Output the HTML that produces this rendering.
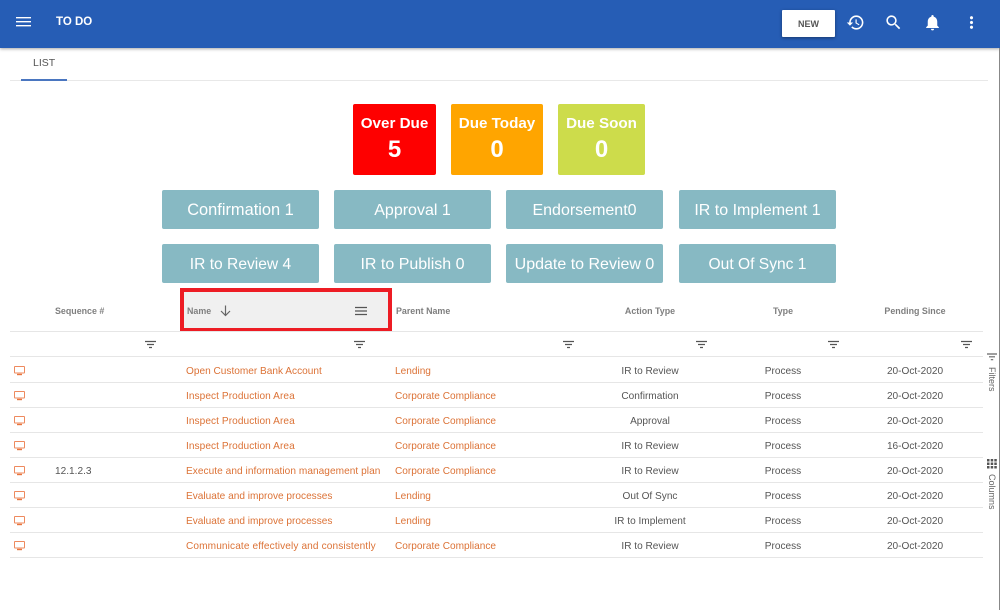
<!DOCTYPE html>
<html><head><meta charset="utf-8"><style>
*{box-sizing:border-box}
html,body{margin:0;padding:0;width:1000px;height:610px;overflow:hidden;background:#fff;font-family:"Liberation Sans",sans-serif}
.a{position:absolute;white-space:nowrap}
.bar{left:0;top:0;width:1000px;height:48px;background:#265db5;box-shadow:0 1px 3px rgba(0,0,0,.35)}
.card{top:104px;height:71px;border-radius:2px;color:#fff;text-align:center;font-weight:bold}
.card b{display:block;font-size:15.2px;line-height:18px;margin-top:11px}
.card i{display:block;font-style:normal;font-size:24px;line-height:28px;margin-top:3px}
.btn{width:157px;height:39px;line-height:41px;background:#87b9c3;border-radius:2px;color:#fff;text-align:center;font-size:16px}
.h{font-size:8.9px;font-weight:bold;color:#7f7f7f;line-height:12px}
.c{font-size:10.1px;line-height:12px;color:#555}
.n{color:#dc7236}
.ctr{transform:translateX(-50%)}
.l{left:10px;width:973px;height:1px;background:#e6e6e6}
</style></head><body>
<div class="a bar"></div>
<svg class="a" style="left:16px;top:17px" width="15" height="10"><path d="M0 .7h15M0 4.700h15M0 8.700h15" stroke="#fff" stroke-width="1.400" fill="none"/></svg>
<div class="a" style="left:56px;top:15px;font-size:11.500px;line-height:14px;font-weight:bold;color:#fff">TO DO</div>
<div class="a" style="left:782px;top:10px;width:53px;height:27px;line-height:29px;background:#fff;border-radius:1px;text-align:center;font-size:9px;font-weight:bold;color:#555;box-shadow:0 1px 3px rgba(0,0,0,.4)">NEW</div>
<svg class="a" style="left:846px;top:13px" width="19" height="19" viewBox="0 0 24 24" fill="#fff"><path d="M13 3c-4.970 0-9 4.030-9 9H1l3.890 3.890.07.140L9 12H6c0-3.870 3.130-7 7-7s7 3.130 7 7-3.130 7-7 7c-1.930 0-3.680-.790-4.940-2.060l-1.420 1.420C8.270 19.990 10.510 21 13 21c4.970 0 9-4.030 9-9s-4.030-9-9-9zm-1 5v5l4.280 2.540.720-1.210-3.500-2.080V8H12z"/></svg>
<svg class="a" style="left:884px;top:13px" width="19" height="19" viewBox="0 0 24 24" fill="#fff"><path d="M15.500 14h-.790l-.280-.270C15.410 12.590 16 11.110 16 9.500 16 5.910 13.090 3 9.500 3S3 5.910 3 9.500 5.910 16 9.500 16c1.610 0 3.090-.590 4.230-1.570l.270.280v.790l5 4.990L20.490 19l-4.990-5zm-6 0C7.010 14 5 11.990 5 9.500S7.010 5 9.500 5 14 7.010 14 9.500 11.990 14 9.500 14z"/></svg>
<svg class="a" style="left:923px;top:13px" width="19" height="19" viewBox="0 0 24 24" fill="#fff"><path d="M12 22c1.100 0 2-.9 2-2h-4c0 1.100.9 2 2 2zm6-6v-5c0-3.070-1.630-5.640-4.500-6.320V4c0-.830-.670-1.500-1.500-1.500s-1.500.670-1.500 1.500v.680C7.640 5.360 6 7.920 6 11v5l-2 2v1h16v-1l-2-2z"/></svg>
<svg class="a" style="left:962px;top:13px" width="19" height="19" viewBox="0 0 24 24" fill="#fff"><path d="M12 8c1.100 0 2-.9 2-2s-.9-2-2-2-2 .9-2 2 .9 2 2 2zm0 2c-1.100 0-2 .9-2 2s.9 2 2 2 2-.9 2-2-.9-2-2-2zm0 6c-1.100 0-2 .9-2 2s.9 2 2 2 2-.9 2-2-.9-2-2-2z"/></svg>
<div class="a" style="left:999px;top:48px;width:1px;height:562px;background:#888"></div>

<div class="a" style="left:33px;top:57px;font-size:10.500px;line-height:13px;color:#555">LIST</div>
<div class="a" style="left:10px;top:80px;width:978px;height:1px;background:#e8e8e8"></div>
<div class="a" style="left:21px;top:79px;width:46px;height:2px;background:#4a76c0"></div>

<div class="a card" style="left:353px;width:83px;background:#fe0000"><b>Over Due</b><i>5</i></div>
<div class="a card" style="left:451px;width:92px;background:#ffa500"><b>Due Today</b><i>0</i></div>
<div class="a card" style="left:558px;width:87px;background:#cddc4b"><b>Due Soon</b><i>0</i></div>

<div class="a btn" style="left:162px;top:190px;font-size:16.400px">Confirmation 1</div>
<div class="a btn" style="left:334px;top:190px">Approval 1</div>
<div class="a btn" style="left:506px;top:190px">Endorsement0</div>
<div class="a btn" style="left:679px;top:190px">IR to Implement 1</div>
<div class="a btn" style="left:162px;top:244px;font-size:15.600px">IR to Review 4</div>
<div class="a btn" style="left:334px;top:244px">IR to Publish 0</div>
<div class="a btn" style="left:506px;top:244px">Update to Review 0</div>
<div class="a btn" style="left:679px;top:244px;font-size:15.600px">Out Of Sync 1</div>

<div class="a" style="left:180px;top:288px;width:212px;height:44px;background:#f0f0f0;border:4px solid #ed1c24"></div>
<div class="a h" style="left:55px;top:305px">Sequence #</div>
<div class="a h" style="left:187px;top:305px">Name</div>
<svg class="a" style="left:220px;top:305px" width="11" height="12"><path d="M5.500 0.500v10M1 6l4.500 4.500L10 6" fill="none" stroke="#666" stroke-width="1.200"/></svg>
<svg class="a" style="left:355px;top:306px" width="12" height="10"><path d="M0 1.500h12M0 5h12M0 8.500h12" stroke="#555" stroke-width="1.300"/></svg>
<div class="a h" style="left:396px;top:305px">Parent Name</div>
<div class="a h ctr" style="left:650px;top:305px">Action Type</div>
<div class="a h ctr" style="left:783px;top:305px">Type</div>
<div class="a h ctr" style="left:915px;top:305px">Pending Since</div>

<div class="a l" style="top:331px"></div>
<div class="a l" style="top:356px"></div>
<div class="a l" style="top:382px"></div>
<div class="a l" style="top:407px"></div>
<div class="a l" style="top:432px"></div>
<div class="a l" style="top:457px"></div>
<div class="a l" style="top:482px"></div>
<div class="a l" style="top:507px"></div>
<div class="a l" style="top:532px"></div>
<div class="a l" style="top:557px"></div>

<svg class="a" style="left:145px;top:340px" width="11" height="9"><path d="M0 1.500h11M2 4.500h7M4 7.500h3" stroke="#555" stroke-width="1.300"/></svg>
<svg class="a" style="left:354px;top:340px" width="11" height="9"><path d="M0 1.500h11M2 4.500h7M4 7.500h3" stroke="#555" stroke-width="1.300"/></svg>
<svg class="a" style="left:563px;top:340px" width="11" height="9"><path d="M0 1.500h11M2 4.500h7M4 7.500h3" stroke="#555" stroke-width="1.300"/></svg>
<svg class="a" style="left:696px;top:340px" width="11" height="9"><path d="M0 1.500h11M2 4.500h7M4 7.500h3" stroke="#555" stroke-width="1.300"/></svg>
<svg class="a" style="left:828px;top:340px" width="11" height="9"><path d="M0 1.500h11M2 4.500h7M4 7.500h3" stroke="#555" stroke-width="1.300"/></svg>
<svg class="a" style="left:961px;top:340px" width="11" height="9"><path d="M0 1.500h11M2 4.500h7M4 7.500h3" stroke="#555" stroke-width="1.300"/></svg>

<svg class="a" style="left:14px;top:366px" width="11" height="10"><path d="M1 .5h9a.5.5 0 0 1 .5.5v5.500a.5.5 0 0 1-.5.500H1a.5.5 0 0 1-.5-.5V1A.5.5 0 0 1 1 .5z" fill="none" stroke="#ee8a5e"/><path d="M3 8.500h5" stroke="#e8753f" stroke-width="1.400"/></svg>
<div class="a c n" style="left:186px;top:366px">Open Customer Bank Account</div>
<div class="a c n" style="left:395px;top:366px">Lending</div>
<div class="a c ctr" style="left:650px;top:366px">IR to Review</div>
<div class="a c ctr" style="left:783px;top:366px">Process</div>
<div class="a c ctr" style="left:915px;top:366px">20-Oct-2020</div>

<svg class="a" style="left:14px;top:391px" width="11" height="10"><path d="M1 .5h9a.5.5 0 0 1 .5.5v5.500a.5.5 0 0 1-.5.500H1a.5.5 0 0 1-.5-.5V1A.5.5 0 0 1 1 .5z" fill="none" stroke="#ee8a5e"/><path d="M3 8.500h5" stroke="#e8753f" stroke-width="1.400"/></svg>
<div class="a c n" style="left:186px;top:391px;letter-spacing:.07px">Inspect Production Area</div>
<div class="a c n" style="left:395px;top:391px">Corporate Compliance</div>
<div class="a c ctr" style="left:650px;top:391px">Confirmation</div>
<div class="a c ctr" style="left:783px;top:391px">Process</div>
<div class="a c ctr" style="left:915px;top:391px">20-Oct-2020</div>

<svg class="a" style="left:14px;top:416px" width="11" height="10"><path d="M1 .5h9a.5.5 0 0 1 .5.5v5.500a.5.5 0 0 1-.5.500H1a.5.5 0 0 1-.5-.5V1A.5.5 0 0 1 1 .5z" fill="none" stroke="#ee8a5e"/><path d="M3 8.500h5" stroke="#e8753f" stroke-width="1.400"/></svg>
<div class="a c n" style="left:186px;top:416px;letter-spacing:.07px">Inspect Production Area</div>
<div class="a c n" style="left:395px;top:416px">Corporate Compliance</div>
<div class="a c ctr" style="left:650px;top:416px">Approval</div>
<div class="a c ctr" style="left:783px;top:416px">Process</div>
<div class="a c ctr" style="left:915px;top:416px">20-Oct-2020</div>

<svg class="a" style="left:14px;top:441px" width="11" height="10"><path d="M1 .5h9a.5.5 0 0 1 .5.5v5.500a.5.5 0 0 1-.5.500H1a.5.5 0 0 1-.5-.5V1A.5.5 0 0 1 1 .5z" fill="none" stroke="#ee8a5e"/><path d="M3 8.500h5" stroke="#e8753f" stroke-width="1.400"/></svg>
<div class="a c n" style="left:186px;top:441px;letter-spacing:.07px">Inspect Production Area</div>
<div class="a c n" style="left:395px;top:441px">Corporate Compliance</div>
<div class="a c ctr" style="left:650px;top:441px">IR to Review</div>
<div class="a c ctr" style="left:783px;top:441px">Process</div>
<div class="a c ctr" style="left:915px;top:441px">16-Oct-2020</div>

<svg class="a" style="left:14px;top:466px" width="11" height="10"><path d="M1 .5h9a.5.5 0 0 1 .5.5v5.500a.5.5 0 0 1-.5.500H1a.5.5 0 0 1-.5-.5V1A.5.5 0 0 1 1 .5z" fill="none" stroke="#ee8a5e"/><path d="M3 8.500h5" stroke="#e8753f" stroke-width="1.400"/></svg>
<div class="a c" style="left:55px;top:466px">12.1.2.3</div>
<div class="a c n" style="left:186px;top:466px;letter-spacing:.05px">Execute and information management plan</div>
<div class="a c n" style="left:395px;top:466px">Corporate Compliance</div>
<div class="a c ctr" style="left:650px;top:466px">IR to Review</div>
<div class="a c ctr" style="left:783px;top:466px">Process</div>
<div class="a c ctr" style="left:915px;top:466px">20-Oct-2020</div>

<svg class="a" style="left:14px;top:491px" width="11" height="10"><path d="M1 .5h9a.5.5 0 0 1 .5.5v5.500a.5.5 0 0 1-.5.500H1a.5.5 0 0 1-.5-.5V1A.5.5 0 0 1 1 .5z" fill="none" stroke="#ee8a5e"/><path d="M3 8.500h5" stroke="#e8753f" stroke-width="1.400"/></svg>
<div class="a c n" style="left:186px;top:491px">Evaluate and improve processes</div>
<div class="a c n" style="left:395px;top:491px">Lending</div>
<div class="a c ctr" style="left:650px;top:491px">Out Of Sync</div>
<div class="a c ctr" style="left:783px;top:491px">Process</div>
<div class="a c ctr" style="left:915px;top:491px">20-Oct-2020</div>

<svg class="a" style="left:14px;top:516px" width="11" height="10"><path d="M1 .5h9a.5.5 0 0 1 .5.5v5.500a.5.5 0 0 1-.5.500H1a.5.5 0 0 1-.5-.5V1A.5.5 0 0 1 1 .5z" fill="none" stroke="#ee8a5e"/><path d="M3 8.500h5" stroke="#e8753f" stroke-width="1.400"/></svg>
<div class="a c n" style="left:186px;top:516px">Evaluate and improve processes</div>
<div class="a c n" style="left:395px;top:516px">Lending</div>
<div class="a c ctr" style="left:650px;top:516px">IR to Implement</div>
<div class="a c ctr" style="left:783px;top:516px">Process</div>
<div class="a c ctr" style="left:915px;top:516px">20-Oct-2020</div>

<svg class="a" style="left:14px;top:541px" width="11" height="10"><path d="M1 .5h9a.5.5 0 0 1 .5.5v5.500a.5.5 0 0 1-.5.500H1a.5.5 0 0 1-.5-.5V1A.5.5 0 0 1 1 .5z" fill="none" stroke="#ee8a5e"/><path d="M3 8.500h5" stroke="#e8753f" stroke-width="1.400"/></svg>
<div class="a c n" style="left:186px;top:541px;letter-spacing:.12px">Communicate effectively and consistently</div>
<div class="a c n" style="left:395px;top:541px">Corporate Compliance</div>
<div class="a c ctr" style="left:650px;top:541px">IR to Review</div>
<div class="a c ctr" style="left:783px;top:541px">Process</div>
<div class="a c ctr" style="left:915px;top:541px">20-Oct-2020</div>

<svg class="a" style="left:987px;top:353px" width="10" height="8"><path d="M0 1h10M2 3.800h6M3.800 6.700h2.400" stroke="#666" stroke-width="1.200" fill="none"/></svg>
<div class="a" style="left:987px;top:367px;font-size:9px;line-height:10px;color:#666;writing-mode:vertical-rl">Filters</div>
<svg class="a" style="left:987px;top:459px" width="10" height="10" fill="#555"><path d="M0 0h2.500v2.500H0zM3.700 0h2.500v2.500H3.700zM7.300 0h2.500v2.500H7.300zM0 3.500h2.500V6H0zM3.700 3.500h2.500V6H3.700zM7.300 3.500h2.500V6H7.300zM0 7h2.500v2.500H0zM3.700 7h2.500v2.500H3.700zM7.300 7h2.500v2.500H7.300z"/></svg>
<div class="a" style="left:987px;top:474px;font-size:9px;line-height:10px;color:#666;writing-mode:vertical-rl">Columns</div>
</body></html>
